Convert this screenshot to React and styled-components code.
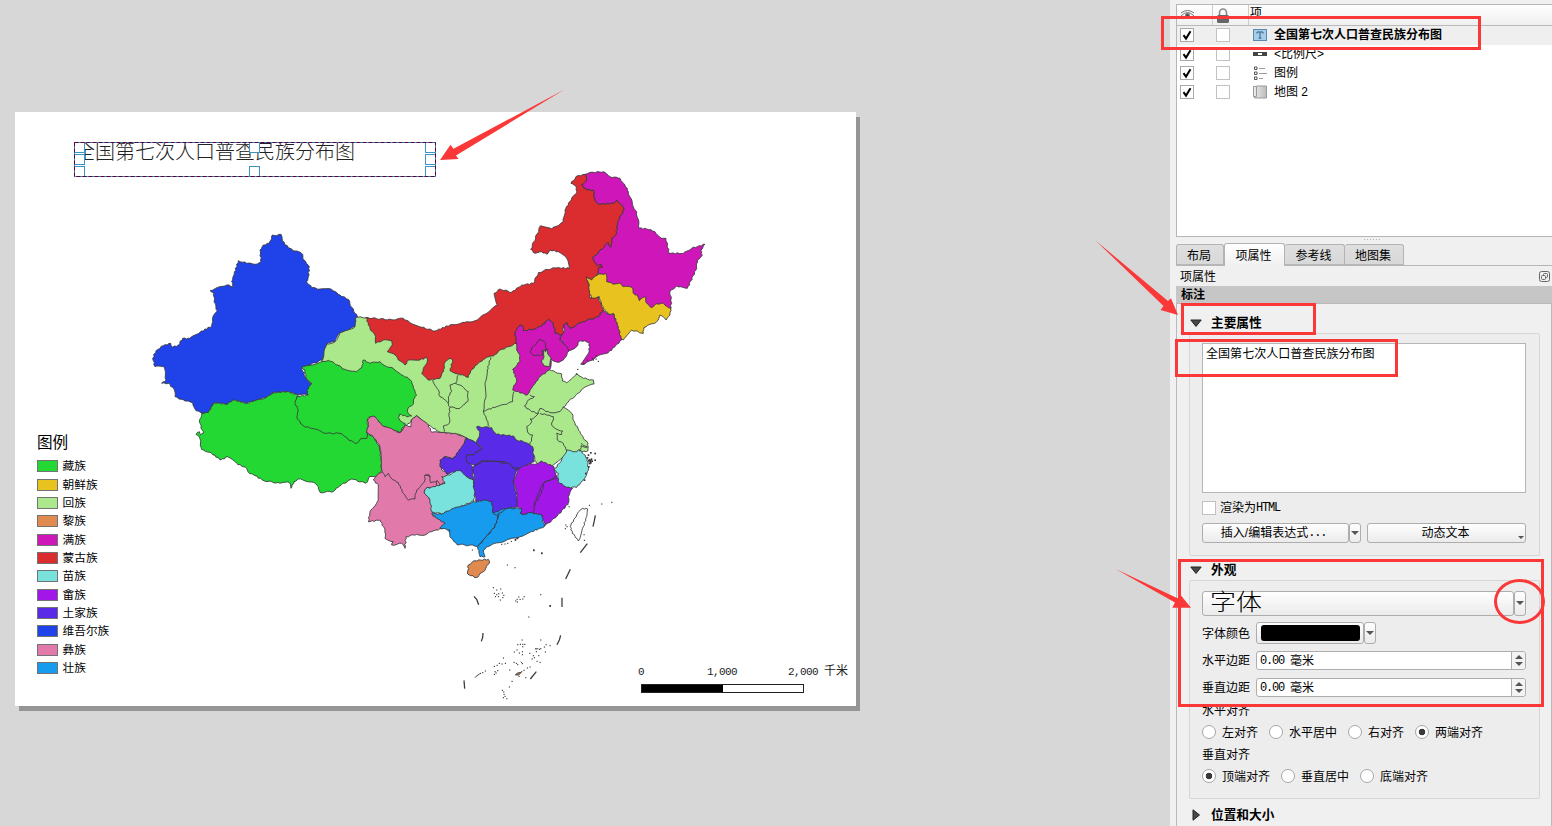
import React from 'react';
import styled, { createGlobalStyle } from 'styled-components';

const GlobalStyle = createGlobalStyle`
  *, *::before, *::after { box-sizing: border-box; }
  body {
    margin: 0;
    overflow: hidden;
    background: #d7d7d7;
    font-family: "Liberation Sans", "Noto Sans CJK SC", sans-serif;
    font-size: 12px;
    line-height: 18px;
    color: #000;
  }
`;

const RED = '#fb3838';

/* ---------- map data: provinces on a grid of thirds of a pixel ---------- */

const C = {
  zang: '#23d833', chaoxian: '#e8c31f', hui: '#abe88b', li: '#e08a50', man: '#cf16b9', menggu: '#db2c30',
  miao: '#7ae2dc', she: '#a216e8', tujia: '#592ae8', weiwuer: '#1f43e8', yi: '#e17aaa', zhuang: '#169bee',
};

const WEST = [-630, -240];
const MID = [0, 0];
const NORTHEAST = [360, -420];
const SOUTH = [180, 360];
const SEA = [270, 600];

const MONGOLIA_SW = '48,53 60,85 77,110 77,130 100,120 125,122 127,135 112,155 135,165 145,180 165,195 175,180 210,180 230,172 232,185 220,205 215,220 235,240 270,235 280,215 283,190 300,175 308,182 300,212 325,222 355,232 362,212 385,190 410,172 430,168 450,150 475,140 500,130 495,100 510,75 520,80 520,92 550,88 575,78 595,58 610,70 615,100 640,105 640,75 650,68 660,85 700,65 745,50 760,30 755,20 745,-10 722,-5 718,-45 710,-65 725,-60 742,-75 745,-95 757,-100 740,-110 727,-125 775,-172 782,-158 785,-185 800,-200 803,-235 823,-273 800,-300 790,-290 745,-288 735,-300 730,-330 710,-330 695,-345 710,-360 705,-377 680,-372 663,-350 678,-342 680,-320 665,-305 645,-270 640,-235 605,-213 572,-223 542,-152 555,-140 575,-145 590,-137 600,-150 625,-145 650,-125 658,-95 610,-97 565,-82 550,-50 515,-45 485,-23 450,-33 432,-20 442,15 410,40 375,62 345,67 300,75 255,93 215,82 180,68 160,55 130,60';

/* flat fills laid under neighbouring provinces of one colour */
const UNDERLAYS = [
  [C.man, '745,-90 790,-80 850,-50 900,0 955,10 955,-20 850,-100 745,-110'],
  [C.she, '510,512 575,488 612,505 625,540 655,568 648,600 585,665 575,640 520,636 505,600'],
  [C.tujia, '355,470 400,445 540,450 545,485 495,515 485,600 440,625 380,595 375,500'],
  [C.yi, '100,515 220,450 270,490 285,545 245,600 245,640 200,640 100,560'],
  [C.miao, '235,570 290,548 345,524 372,545 372,598 310,625 250,635'],
  [C.zhuang, '255,645 430,605 575,650 575,680 400,735 320,725'],
];

const PROVINCES = [
  [WEST, C.weiwuer, '397,45 410,47 423,43 427,63 445,83 465,93 485,100 492,120 508,140 505,170 500,185 515,203 540,207 575,208 600,225 625,238 635,262 652,290 645,320 625,330 600,338 585,365 560,372 548,420 485,443 495,470 515,492 503,512 508,525 470,523 440,515 400,518 378,533 350,540 320,550 280,540 262,553 222,548 205,578 185,580 168,572 158,547 135,543 105,530 102,507 85,490 65,490 78,480 72,440 45,440 38,415 48,392 70,377 92,370 98,382 115,375 128,355 150,355 180,337 215,318 218,293 232,273 222,245 222,218 210,212 260,195 280,200 275,185 295,122 320,130 345,133 363,125 360,90 370,75 388,70 395,55'],
  [WEST, C.zang, '185,580 205,578 222,548 262,553 280,540 320,550 350,540 378,533 400,518 440,515 470,523 500,560 640,600 683,640 700,650 718,680 725,730 723,755 710,768 688,770 678,790 635,777 600,797 580,815 540,817 535,800 520,787 475,777 462,785 453,805 448,787 420,790 372,782 345,767 325,757 320,745 290,730 262,710 243,720 210,697 185,688 178,650 168,643 178,635 182,645 190,640 178,605'],
  [MID, C.hui, '-85,185 -70,132 -45,125 -30,98 -5,90 15,80 18,52 48,53 200,110 400,120 500,130 560,180 605,212 635,222 637,243 650,248 680,220 700,235 730,240 732,252 700,265 680,283 650,310 640,322 665,340 675,370 690,395 700,415 714,430 714,452 690,458 650,462 600,500 560,490 540,440 400,400 380,430 345,412 320,402 270,397 235,375 198,347 150,398 0,300'],
  [MID, C.zang, '-145,203 -85,185 -65,181 -30,198 -24,206 20,215 36,202 40,180 60,190 90,185 110,200 130,205 155,225 175,235 185,245 190,265 200,285 190,300 190,312 178,320 172,335 185,348 175,350 148,343 145,352 155,365 165,370 167,380 155,385 150,398 130,390 115,385 95,375 80,360 75,350 60,350 52,360 55,380 50,395 50,415 30,418 20,430 0,422 -10,412 -30,400 -70,400 -115,385 -140,378 -158,357 -155,330 -165,310 -160,290 -125,285 -130,270 -115,252 -133,230 -135,210'],
  [MID, C.menggu, MONGOLIA_SW],
  [NORTHEAST, C.man, '345,43 370,37 400,35 420,50 450,55 465,75 475,95 490,140 500,155 508,205 530,207 555,215 575,235 588,235 597,280 640,280 665,265 705,253 692,270 697,285 682,300 680,325 652,385 620,378 600,395 605,430 600,450 545,455 505,435 470,400 415,375 400,345 385,340 385,325 397,322 393,313 382,318 367,295 415,248 422,262 425,235 440,220 443,185 463,147 440,120 430,130 385,132 375,120 370,90 350,90 335,75 350,60'],
  [NORTHEAST, C.man, '400,450 415,465 430,460 445,500 455,540 415,578 380,590 345,612 332,612 358,573 358,550 345,542 325,545 320,560 295,573 285,555 270,540 285,510 280,495 290,488 300,505 340,485 385,470'],
  [NORTHEAST, C.chaoxian, '350,350 365,360 382,345 408,340 410,365 435,372 450,368 460,380 485,382 492,402 503,405 508,422 525,410 530,430 545,443 555,433 580,430 602,445 600,465 588,480 570,465 560,485 522,503 520,520 485,510 460,540 453,535 445,500 430,460 415,462 400,445 395,435 388,410 365,415 358,400 358,375 350,358'],
  [NORTHEAST, C.man, '140,550 135,520 150,495 160,500 160,512 190,508 215,498 235,478 250,490 255,520 275,525 270,540 285,555 297,573 280,600 262,607 243,597 240,628 210,650 180,690 172,705 128,690 140,660 128,628 150,605 150,585 140,570'],
  [NORTHEAST, C.man, '210,537 228,550 228,570 215,575 220,585 190,587 180,575 185,563 200,550'],
  [NORTHEAST, C.hui, '218,570 226,575 232,565 235,585 243,595 240,618 222,618 215,602 222,590'],
  [MID, C.yi, '97,515 85,520 70,540 85,555 85,600 60,635 55,665 90,660 105,690 105,715 130,725 125,735 155,730 165,745 168,710 200,703 225,705 245,695 265,690 285,680 285,665 250,650 245,610 235,590 223,580 228,565 260,560 260,540 225,525'],
  [MID, C.yi, '50,398 55,380 52,360 60,350 75,350 95,375 130,390 150,398 165,375 183,380 185,360 200,347 235,375 245,397 270,397 320,402 348,415 340,440 310,475 285,470 270,490 275,510 295,520 285,548 270,555 262,542 242,548 238,525 225,525 225,540 200,570 195,597 175,600 160,580 145,548 130,540 115,520 105,530 97,515 93,460 85,430 65,405'],
  [MID, C.zhuang, '245,640 275,642 310,622 330,620 370,605 425,598 430,640 445,645 435,680 405,715 385,738 320,733 300,710 300,690 270,685 285,670 260,655'],
  [MID, C.miao, '228,565 255,560 285,550 275,530 300,525 325,508 345,518 350,530 372,540 370,560 375,570 372,603 330,620 310,625 275,642 245,635 240,600 223,580'],
  [MID, C.tujia, '348,415 380,430 397,445 370,465 350,465 350,485 368,500 370,540 350,530 330,510 290,522 270,500 270,480 285,470 310,477 335,440'],
  [MID, C.tujia, '380,380 425,383 440,403 490,408 500,420 520,425 548,440 553,485 520,500 490,505 465,485 400,482 375,495 350,485 350,465 372,463 397,445 380,430 390,395'],
  [MID, C.she, '503,508 540,490 560,492 575,483 590,490 612,500 620,530 585,545 570,570 555,605 550,640 515,643 510,625 500,620 500,580 490,545'],
  [MID, C.tujia, '370,500 400,482 440,485 480,492 490,505 503,508 490,545 500,580 500,620 475,625 450,630 430,640 425,605 405,600 378,605 373,570'],
  [MID, C.she, '580,560 585,545 625,535 650,562 668,565 655,590 655,610 620,650 585,677 575,645 550,640 555,610 570,590'],
  [MID, C.miao, '612,510 635,480 650,450 675,455 690,450 712,475 715,510 700,540 680,562 650,562 625,545 625,520'],
  [MID, C.zhuang, '445,640 475,625 515,625 510,640 518,645 540,638 575,645 583,680 540,697 510,710 480,717 410,740 400,750 405,770 390,770 383,740 405,715 435,680 445,650'],
  [SOUTH, C.li, '175,435 195,422 235,418 238,430 220,455 198,473 173,462'],
  [SOUTH, '#fff', '518,265 533,267 530,290 520,320 505,363 482,330 483,315 500,285'],
];

const BORDERS = [
  '248,240 265,270 270,290 295,310',
  '325,225 317,250 300,255 305,275 295,290 295,310',
  '317,250 340,262 355,275 353,305 340,315 330,325 300,322 295,310',
  '300,322 297,340 298,370 280,378 283,395',
  '422,172 412,210 405,250 408,290 400,333',
  '400,333 440,320 470,313 488,305 492,275',
  '400,333 410,360 418,380',
  '540,285 553,290 535,300 523,318 545,335 565,340 570,325 600,338 630,335 640,320',
  '565,340 550,355 540,357 545,365 530,380 535,400 548,405 540,435',
  '570,340 590,345 610,350 605,375 625,390 638,393 635,403 620,400 622,420 640,430 650,452',
  '690,455 693,437 712,442', '693,430 712,440',
];

const DASHES = [
  '466,46 463,62 459,80', '442,131 421,158', '391,208 377,237', '366,293 366,321', '362,406 358,420 351,434',
  '289,515 271,537', '102,289 110,298 116,314', '129,399 128,412 124,424', '72,541 74,566',
];

const ISLETS = [
  [160, 263], [182, 267], [170, 270], [163, 280], [170, 284], [176, 281], [187, 279], [191, 286], [166, 290], [175, 290], [188, 293], [181, 300],
  [236, 291], [231, 298], [227, 303], [240, 298], [248, 297], [252, 290], [232, 306], [302, 284], [266, 351], [202, 195], [225, 203],
  [246, 420], [233, 434], [241, 433], [248, 433], [254, 433], [248, 440], [231, 450], [223, 456], [238, 459], [247, 464], [247, 455],
  [302, 420], [298, 448], [302, 446], [313, 441], [318, 434], [330, 437], [289, 455], [269, 460], [280, 467], [283, 473], [296, 467], [316, 456],
  [190, 474], [186, 492], [196, 490], [178, 490], [171, 496], [163, 499], [222, 487], [229, 490], [233, 494], [247, 491], [262, 504], [270, 501], [300, 487],
  [209, 510], [252, 511], [245, 515], [165, 515], [163, 523], [173, 512], [168, 519], [136, 513], [128, 518], [121, 520], [237, 529], [257, 533], [216, 544],
  [208, 561], [187, 571], [191, 576], [192, 583], [195, 589], [200, 596], [190, 593], [287, 446], [276, 477], [291, 484],
  [448, 16], [485, 12], [515, 7], [377, 75], [381, 80], [376, 86], [432, 104], [433, 121], [97, 150], [185, 133], [195, 132], [203, 130], [214, 124],
  [383, 14], [387, 20],
];
const BIG_ISLETS = [[282, 151], [306, 160], [331, 318], [233, 115], [227, 120]];
const ZHOUSHAN = [[715, 465], [722, 458], [735, 460], [712, 473], [718, 479], [724, 477], [720, 485], [726, 483], [719, 490], [722, 481], [716, 482], [735, 480], [716, 500], [707, 520], [703, 540], [722, 488]];
const BOHAI = [[683, 208], [681, 223], [700, 190], [712, 180], [730, 180], [738, 177], [745, 184], [738, 168], [727, 175]];

function coastline(points, shift, closed) {
  const p = points.split(' ').map((s) => s.split(',').map(Number));
  const out = [];
  const n = closed ? p.length : p.length - 1;
  for (let i = 0; i < n; i += 1) {
    const a = [p[i][0] + shift[0], p[i][1] + shift[1]];
    const q = p[(i + 1) % p.length];
    const b = [q[0] + shift[0], q[1] + shift[1]];
    const len = Math.hypot(b[0] - a[0], b[1] - a[1]);
    const steps = Math.max(1, Math.round(len / 6));
    out.push(a);
    for (let k = 1; k < steps; k += 1) {
      const x = a[0] + ((b[0] - a[0]) * k) / steps;
      const y = a[1] + ((b[1] - a[1]) * k) / steps;
      const wave = Math.sin(x * 12.9 + y * 78.2) * 1.9;
      out.push([x - ((b[1] - a[1]) / len) * wave, y + ((b[0] - a[0]) / len) * wave]);
    }
    if (!closed && i === n - 1) out.push(b);
  }
  return `M${out.map((v) => v.map((c) => c.toFixed(1)).join(' ')).join('L')}${closed ? 'Z' : ''}`;
}

/* ---------- canvas ---------- */

const Screen = styled.main`
  position: relative;
  display: flex;
  width: 1552px;
  height: 826px;
  overflow: hidden;
`;

const Canvas = styled.section`
  flex: 0 0 1170px;
  padding: 112px 0 0 15px;
  background: #d7d7d7;
`;

const Sheet = styled.div`
  position: relative;
  width: 841px;
  height: 594px;
  background: #fff;
  box-shadow: 4px 5px 0 #959595;
`;

const MapSvg = styled.svg`
  display: block;
  width: 841px;
  height: 594px;
`;

const TitleItem = styled.div`
  position: absolute;
  left: 59px;
  top: 30px;
  width: 362px;
  height: 35px;
  overflow: hidden;
  font-family: "Liberation Serif", "Noto Sans CJK SC", serif;
  font-size: 20px;
  font-weight: 300;
  line-height: 21px;
  white-space: nowrap;
  padding-left: 1px;
  color: #222;
`;

const TitleFrame = styled.svg`
  position: absolute;
  inset: 0;
`;

const Legend = styled.div`
  position: absolute;
  left: 22px;
  top: 320px;
`;

const LegendTitle = styled.div`
  height: 25px;
  font-size: 15.6px;
  line-height: 22px;
`;

const LegendRow = styled.div`
  display: flex;
  align-items: center;
  gap: 4.5px;
  height: 18.37px;
  font-size: 11.7px;
  line-height: 18px;
  white-space: nowrap;
`;

const Swatch = styled.span`
  width: 21px;
  height: 12px;
  border: 1px solid rgba(40, 40, 40, 0.65);
  background: ${(p) => p.$color};
  background-clip: padding-box;
`;

const ScaleBar = styled.div`
  position: absolute;
  left: 626px;
  top: 551px;
  width: 163px;
`;

const ScaleLabels = styled.div`
  display: flex;
  height: 21px;
  font-family: "Liberation Mono", "Noto Sans CJK SC", monospace;
  font-size: 11px;
  letter-spacing: -0.6px;
  line-height: 18px;
  white-space: nowrap;
  color: #222;

  span { flex: 0 0 81px; }
  span:nth-child(1) { margin-left: -3px; flex-basis: 69px; }
  i { font-style: normal; font-size: 12px; letter-spacing: 0; }
`;

const ScaleTrack = styled.div`
  display: flex;
  height: 9px;
  border: 1px solid #222;
  &::before { content: ""; width: 50.5%; background: #000; }
`;

/* ---------- side panel ---------- */

const Panel = styled.aside`
  flex: 1;
  min-width: 0;
  display: flex;
  flex-direction: column;
  padding: 4px 0 0 6px;
  background: #f0f0f0;
  white-space: nowrap;
`;

const ItemTree = styled.div`
  height: 233px;
  border: 1px solid #b6b6b6;
  border-right: 0;
  background: #fff;
`;

const TreeHeader = styled.div`
  display: flex;
  height: 21px;
  border-bottom: 1px solid #b9b9b9;
  background: linear-gradient(#fff, #efefef);
`;

const HeaderCell = styled.div`
  display: flex;
  flex: ${(p) => (p.$grow ? '1' : `0 0 ${p.$w}px`)};
  align-items: center;
  padding-left: ${(p) => p.$pad}px;
  border-right: ${(p) => (p.$grow ? 0 : '1px solid #ccc')};
  line-height: 16px;
`;

const HeaderText = styled.span`
  position: relative;
  top: -2px;
`;

const TreeRow = styled.div`
  display: flex;
  align-items: center;
  height: 19px;
  padding: 0 0 2px 3px;
  background: ${(p) => (p.$selected ? '#efefef' : '#fff')};
  font-weight: ${(p) => (p.$selected ? 700 : 400)};
  svg { flex: none; }
`;

const Check = styled.span`
  display: flex;
  flex: none;
  width: 14px;
  height: 14px;
  margin-right: ${(p) => p.$gap || 0}px;
  border: 1px solid ${(p) => (p.$dark ? '#a9a9a9' : '#c2c2c2')};
  background: #fff;
`;

const ItemIcon = styled.svg`
  width: 14px;
  height: 14px;
  margin-right: 7px;
`;

const Splitter = styled.div`
  height: 6px;
  padding: 2px 0 0 188px;
  &::before {
    content: "";
    display: block;
    width: 17px;
    height: 1px;
    background: repeating-linear-gradient(90deg, #b5b5b5 0 1px, transparent 1px 3px);
  }
`;

const Tabs = styled.div`
  display: flex;
  align-items: flex-end;
  height: 23px;
  border-bottom: 1px solid #b6b6b6;
`;

const Tab = styled.div`
  width: ${(p) => p.$w}px;
  height: ${(p) => (p.$active ? 23 : 21)}px;
  margin-bottom: ${(p) => (p.$active ? -1 : 0)}px;
  padding-right: 2px;
  border: 1px solid #b3b3b3;
  border-bottom: ${(p) => (p.$active ? '0' : '1px solid #b6b6b6')};
  border-left-width: ${(p) => (p.$first || p.$active ? 1 : 0)}px;
  border-radius: 3px 3px 0 0;
  background: ${(p) => (p.$active ? 'linear-gradient(#fff, #f0f0f0)' : 'linear-gradient(#dfdfdf, #d8d8d8)')};
  text-align: center;
  line-height: ${(p) => (p.$active ? 24 : 22)}px;
`;

const DockTitle = styled.div`
  display: flex;
  align-items: center;
  justify-content: space-between;
  height: 20px;
  padding: 1px 2px 0 4px;
`;

const TypeBar = styled.div`
  height: 17px;
  padding-left: 5px;
  background: #c6c6c6;
  font-weight: 700;
  line-height: 19px;
`;

const ScrollArea = styled.div`
  height: 524px;
  padding: 10px 11px 0 12px;
  border: 1px solid #b9b9b9;
  border-bottom: 0;
`;

const GroupHeader = styled.div`
  display: flex;
  align-items: center;
  gap: 9px;
  height: 18px;
  margin-top: ${(p) => p.$mt || 0}px;
  padding-left: 1px;
  font-size: 12.7px;
  font-weight: 700;
`;

const GroupBox = styled.div`
  height: ${(p) => p.$h}px;
  margin-top: 1px;
  padding: ${(p) => p.$top || 10}px 13px 0 12px;
  border: 1px solid #d6d6d6;
  border-radius: 2px;
  background: #ededed;
`;

const TextArea = styled.div`
  height: 150px;
  padding: 1px 3px;
  border: 1px solid #b6b6b6;
  background: #fff;
  font-size: 12.05px;
`;

const Line = styled.div`
  display: flex;
  align-items: center;
  height: ${(p) => p.$h}px;
  margin-top: ${(p) => p.$mt || 0}px;
`;

const Button = styled.div`
  display: flex;
  align-items: center;
  justify-content: ${(p) => (p.$left ? 'flex-start' : 'center')};
  position: relative;
  flex: 0 0 ${(p) => p.$w}px;
  height: 100%;
  margin-left: ${(p) => p.$ml || 0}px;
  padding: ${(p) => p.$pad || '0'};
  border: 1px solid #adadad;
  border-radius: 3px;
  background: linear-gradient(#fefefe, #ebebeb);
`;

const Sample = styled.span`
  font-family: "Liberation Serif", "Noto Sans CJK SC", serif;
  font-size: 26px;
  font-weight: 300;
  line-height: 24px;
  transform: scaleY(0.86);
`;

const Caret = styled.span`
  border: solid transparent;
  border-width: 4px 4px 0;
  border-top-color: #555;
`;

const CornerCaret = styled(Caret)`
  position: absolute;
  right: 1px;
  bottom: 3px;
  border-width: 3px 3px 0;
`;

const FieldLabel = styled.span`
  flex: 0 0 54px;
  padding-top: 2px;
`;

const Caption = styled.span`
  padding-top: 2px;
`;

const ColorChip = styled.span`
  width: 99px;
  height: 16px;
  border-radius: 3px;
  background: #000;
`;

const Spin = styled.div`
  display: flex;
  flex: 1;
  height: 19px;
  border: 1px solid #adadad;
  border-radius: 3px;
  background: #fff;
  line-height: 19px;
`;

const SpinValue = styled.span`
  flex: 1;
  display: flex;
  gap: 6px;
  padding-left: 3px;
`;

const Mono = styled.span`
  font-family: "Liberation Mono", monospace;
  font-size: 12px;
  letter-spacing: -1.2px;
`;

const SpinButtons = styled.span`
  display: flex;
  flex-direction: column;
  align-items: center;
  justify-content: center;
  gap: 3px;
  width: 14px;
  border-left: 1px solid #adadad;
  background: #f3f3f3;
  border-radius: 0 3px 3px 0;
`;

const CaretUp = styled(Caret)`
  transform: rotate(180deg);
`;

const Radio = styled.span`
  display: flex;
  align-items: center;
  margin-right: 11px;
  &::before {
    content: "";
    width: 14px;
    height: 14px;
    margin-right: 6px;
    border: 1px solid #a6a6a6;
    border-radius: 50%;
    background: ${(p) => (p.$on ? 'radial-gradient(circle, #3a3a3a 0 3px, #fff 3.6px)' : '#fff')};
  }
`;

/* ---------- annotations ---------- */

const Callout = styled.div`
  position: absolute;
  left: ${(p) => p.$x}px;
  top: ${(p) => p.$y}px;
  width: ${(p) => p.$w}px;
  height: ${(p) => p.$h}px;
  border: 3px solid ${RED};
  border-radius: ${(p) => (p.$round ? '50%' : 0)};
`;

const Arrows = styled.svg`
  position: absolute;
  inset: 0;
  pointer-events: none;
`;

const LEGEND = [
  ['藏族', C.zang], ['朝鲜族', C.chaoxian], ['回族', C.hui], ['黎族', C.li], ['满族', C.man], ['蒙古族', C.menggu],
  ['苗族', C.miao], ['畲族', C.she], ['土家族', C.tujia], ['维吾尔族', C.weiwuer], ['彝族', C.yi], ['壮族', C.zhuang],
];

const HANDLES = [[0, 0], [175, 0], [351, 0], [0, 12], [351, 12], [0, 24], [175, 24], [351, 24]];

function ChinaMap() {
  return (
    <MapSvg viewBox="15 112 841 594">
      <g transform="translate(350 300) scale(0.33333)" stroke="#39393c" strokeWidth="2.6" strokeLinejoin="round">
        {UNDERLAYS.map(([fill, pts]) => <polygon key={pts} points={pts} fill={fill} stroke="none" />)}
        {PROVINCES.map(([shift, fill, pts], i) => <path key={i} fill={fill} d={coastline(pts, shift, true)} />)}
        {BORDERS.map((pts) => <path key={pts} fill="none" d={coastline(pts, MID, false)} />)}
        {DASHES.map((pts) => <polyline key={pts} points={pts} fill="none" strokeWidth="3.8" transform={`translate(${SEA})`} />)}
        <g stroke="none" fill="#333">
          {ISLETS.map(([x, y]) => <rect key={`${x}-${y}`} x={x + SEA[0] - 1.5} y={y + SEA[1] - 1.5} width="3.6" height="3.2" />)}
          {BIG_ISLETS.map(([x, y]) => <rect key={`${x}-${y}`} x={x + SEA[0] - 3} y={y + SEA[1] - 3} width="5" height="5.5" />)}
          {ZHOUSHAN.map(([x, y]) => <rect key={`${x}-${y}`} x={x - 2} y={y - 2} width="5" height="5" />)}
          {BOHAI.map(([x, y]) => <rect key={`${x}-${y}`} x={x - 1.5} y={y - 1.5} width="3.5" height="3.5" />)}
        </g>
        <path d="M496 1125l6-6 12-2-8 8z M557 1048l8-3 M375 1133l8-8 6-3 M512 1085l6 6" fill="#b9794f" />
      </g>
    </MapSvg>
  );
}

const CheckMark = () => (
  <svg width="12" height="12" viewBox="0 0 12 12"><path d="M2.5 6.2L5 9.6 9.5 2.2" fill="none" stroke="#000" strokeWidth="2" /></svg>
);

function Row({ selected, icon, children }) {
  return (
    <TreeRow $selected={selected}>
      <Check $gap={22} $dark><CheckMark /></Check>
      <Check $gap={23} />
      <ItemIcon viewBox="0 0 14 14">{icon}</ItemIcon>
      {children}
    </TreeRow>
  );
}

const Fold = ({ closed }) => (
  <svg width="12" height="12" viewBox="0 0 12 12">
    <path d={closed ? 'M3 0.8V11.2L9.5 6z' : 'M.8 3H11.2L6 9.5z'} fill="#484848" stroke="#222" />
  </svg>
);

const SpinBox = () => (
  <Spin>
    <SpinValue><Mono>0.00</Mono>毫米</SpinValue>
    <SpinButtons><CaretUp /><Caret /></SpinButtons>
  </Spin>
);

const Option = ({ on, children }) => <Radio $on={on}><Caption>{children}</Caption></Radio>;

export default function App() {
  return (
    <Screen>
      <GlobalStyle />
      <Canvas>
        <Sheet>
          <ChinaMap />
          <TitleItem>全国第七次人口普查民族分布图
            <TitleFrame width="362" height="35">
              {HANDLES.map(([x, y]) => <rect key={`${x}-${y}`} x={x + 0.5} y={y + 0.5} width="10" height="10" fill="#fff" stroke="#3b94c4" />)}
              <rect x=".5" y=".5" width="361" height="34" fill="none" stroke="#3b94c4" />
              <rect x=".5" y=".5" width="361" height="34" fill="none" stroke="#5c0038" strokeDasharray="4 2" />
            </TitleFrame>
          </TitleItem>
          <Legend>
            <LegendTitle>图例</LegendTitle>
            {LEGEND.map(([name, color]) => <LegendRow key={name}><Swatch $color={color} />{name}</LegendRow>)}
          </Legend>
          <ScaleBar>
            <ScaleLabels><span>0</span><span>1,000</span><span>2,000 <i>千米</i></span></ScaleLabels>
            <ScaleTrack />
          </ScaleBar>
        </Sheet>
      </Canvas>

      <Panel>
        <ItemTree>
          <TreeHeader>
            <HeaderCell $w={36} $pad={3}>
              <svg width="15" height="12" viewBox="0 0 15 12" fill="none" stroke="#777">
                <path d="M1 7Q7.500 0 14 7Q7.500 12 1 7zM1 4Q7.500-1 14 4" /><circle cx="7.500" cy="6.500" r="2" fill="#555" />
              </svg>
            </HeaderCell>
            <HeaderCell $w={36} $pad={4}>
              <svg width="12" height="15" viewBox="0 0 12 15">
                <path d="M2.500 8V4.500a3.500 3.500 0 0 1 7 0V8" fill="none" stroke="#888" strokeWidth="1.600" />
                <rect y="7" width="12" height="8" rx="1.500" fill="#666" />
              </svg>
            </HeaderCell>
            <HeaderCell $grow $pad={1}><HeaderText>项</HeaderText></HeaderCell>
          </TreeHeader>
          <Row selected icon={<><rect x=".5" y="1.500" width="13" height="11" fill="#a5cdec" stroke="#5a8ab0" /><path d="M4 5.500V4h6v1.500M7 4v6M5.500 10.200h3" fill="none" stroke="#3c5f7c" /></>}>
            全国第七次人口普查民族分布图
          </Row>
          <Row icon={<><rect y="5" width="14" height="4" fill="#444" /><rect x="5" y="6" width="4" height="2" fill="#fff" /></>}>&lt;比例尺&gt;</Row>
          <Row icon={<g fill="none" stroke="#555"><path d="M1.500 1h2.500v2.500h-2.500zM1.500 6h2.500v2.500h-2.500zM1.500 11h2.500v2.500h-2.500z" /><path d="M6 2.500h6M6 7.500h8M6 12.500h4" stroke="#999" /></g>}>图例</Row>
          <Row icon={<><defs><linearGradient id="sheetShade"><stop stopColor="#eee" /><stop offset="1" stopColor="#bbb" /></linearGradient></defs><path d="M.5 1.500h3v-.500h10v12h-12v-1.500h-1z" fill="url(#sheetShade)" stroke="#999" /><path d="M3.500 1.500v10h-3" fill="none" stroke="#999" /></>}>地图 2</Row>
        </ItemTree>
        <Splitter />
        <Tabs>
          <Tab $w={48} $first>布局</Tab>
          <Tab $w={61} $active>项属性</Tab>
          <Tab $w={60}>参考线</Tab>
          <Tab $w={59}>地图集</Tab>
        </Tabs>
        <DockTitle>
          <Caption>项属性</Caption>
          <svg width="11" height="11" viewBox="0 0 11 11" fill="none" stroke="#666">
            <rect x=".5" y=".5" width="10" height="10" rx="2" /><rect x="4.500" y="2.500" width="4" height="4" rx="1" /><rect x="2.500" y="4.500" width="4" height="4" rx="1" fill="#f0f0f0" />
          </svg>
        </DockTitle>
        <TypeBar>标注</TypeBar>
        <ScrollArea>
          <GroupHeader><Fold />主要属性</GroupHeader>
          <GroupBox $h={223} $top={9}>
            <TextArea>全国第七次人口普查民族分布图</TextArea>
            <Line $h={14} $mt={8}><Check $gap={4} />渲染为<Mono>HTML</Mono></Line>
            <Line $h={20} $mt={8}>
              <Button $w={147} $pad="1px 4px 0 0">插入/编辑表达式<Mono>...</Mono></Button>
              <Button $w={12}><Caret /></Button>
              <Button $w={159} $ml={6} $pad="1px 2px 0 0">动态文本<CornerCaret /></Button>
            </Line>
          </GroupBox>
          <GroupHeader $mt={5}><Fold />外观</GroupHeader>
          <GroupBox $h={219}>
            <Line $h={25}>
              <Button $w={312} $left $pad="0 0 0 7px"><Sample>字体</Sample></Button>
              <Button $w={12}><Caret /></Button>
            </Line>
            <Line $h={22} $mt={6}>
              <FieldLabel>字体颜色</FieldLabel>
              <Button $w={108}><ColorChip /></Button>
              <Button $w={12}><Caret /></Button>
            </Line>
            <Line $h={19} $mt={7}><FieldLabel>水平边距</FieldLabel><SpinBox /></Line>
            <Line $h={19} $mt={8}><FieldLabel>垂直边距</FieldLabel><SpinBox /></Line>
            <Line $h={18} $mt={4}><Caption>水平对齐</Caption></Line>
            <Line $h={18} $mt={4}><Option>左对齐</Option><Option>水平居中</Option><Option>右对齐</Option><Option on>两端对齐</Option></Line>
            <Line $h={18} $mt={4}><Caption>垂直对齐</Caption></Line>
            <Line $h={18} $mt={4}><Option on>顶端对齐</Option><Option>垂直居中</Option><Option>底端对齐</Option></Line>
          </GroupBox>
          <GroupHeader $mt={7}><Fold closed />位置和大小</GroupHeader>
        </ScrollArea>
      </Panel>

      <Callout $x={1161} $y={16} $w={320} $h={34} />
      <Callout $x={1181} $y={303} $w={135} $h={32} />
      <Callout $x={1175} $y={339} $w={223} $h={38} />
      <Callout $x={1178} $y={559} $w={366} $h={148} />
      <Callout $round $x={1494} $y={579} $w={51} $h={45} />
      <Arrows width="1552" height="826" fill={RED}>
        <path d="M440 160L450.500 144.700 453.500 148.700 564.500 89.500 456 155.500 458.500 159z" />
        <path d="M1095.500 240.500L1168 301 1171 298.300 1178 315 1160.500 310 1163.500 306z" />
        <path d="M1115.500 569L1177.500 598.300 1180 594.300 1191 607.700 1172.300 607.700 1175 602.500z" />
      </Arrows>
    </Screen>
  );
}
